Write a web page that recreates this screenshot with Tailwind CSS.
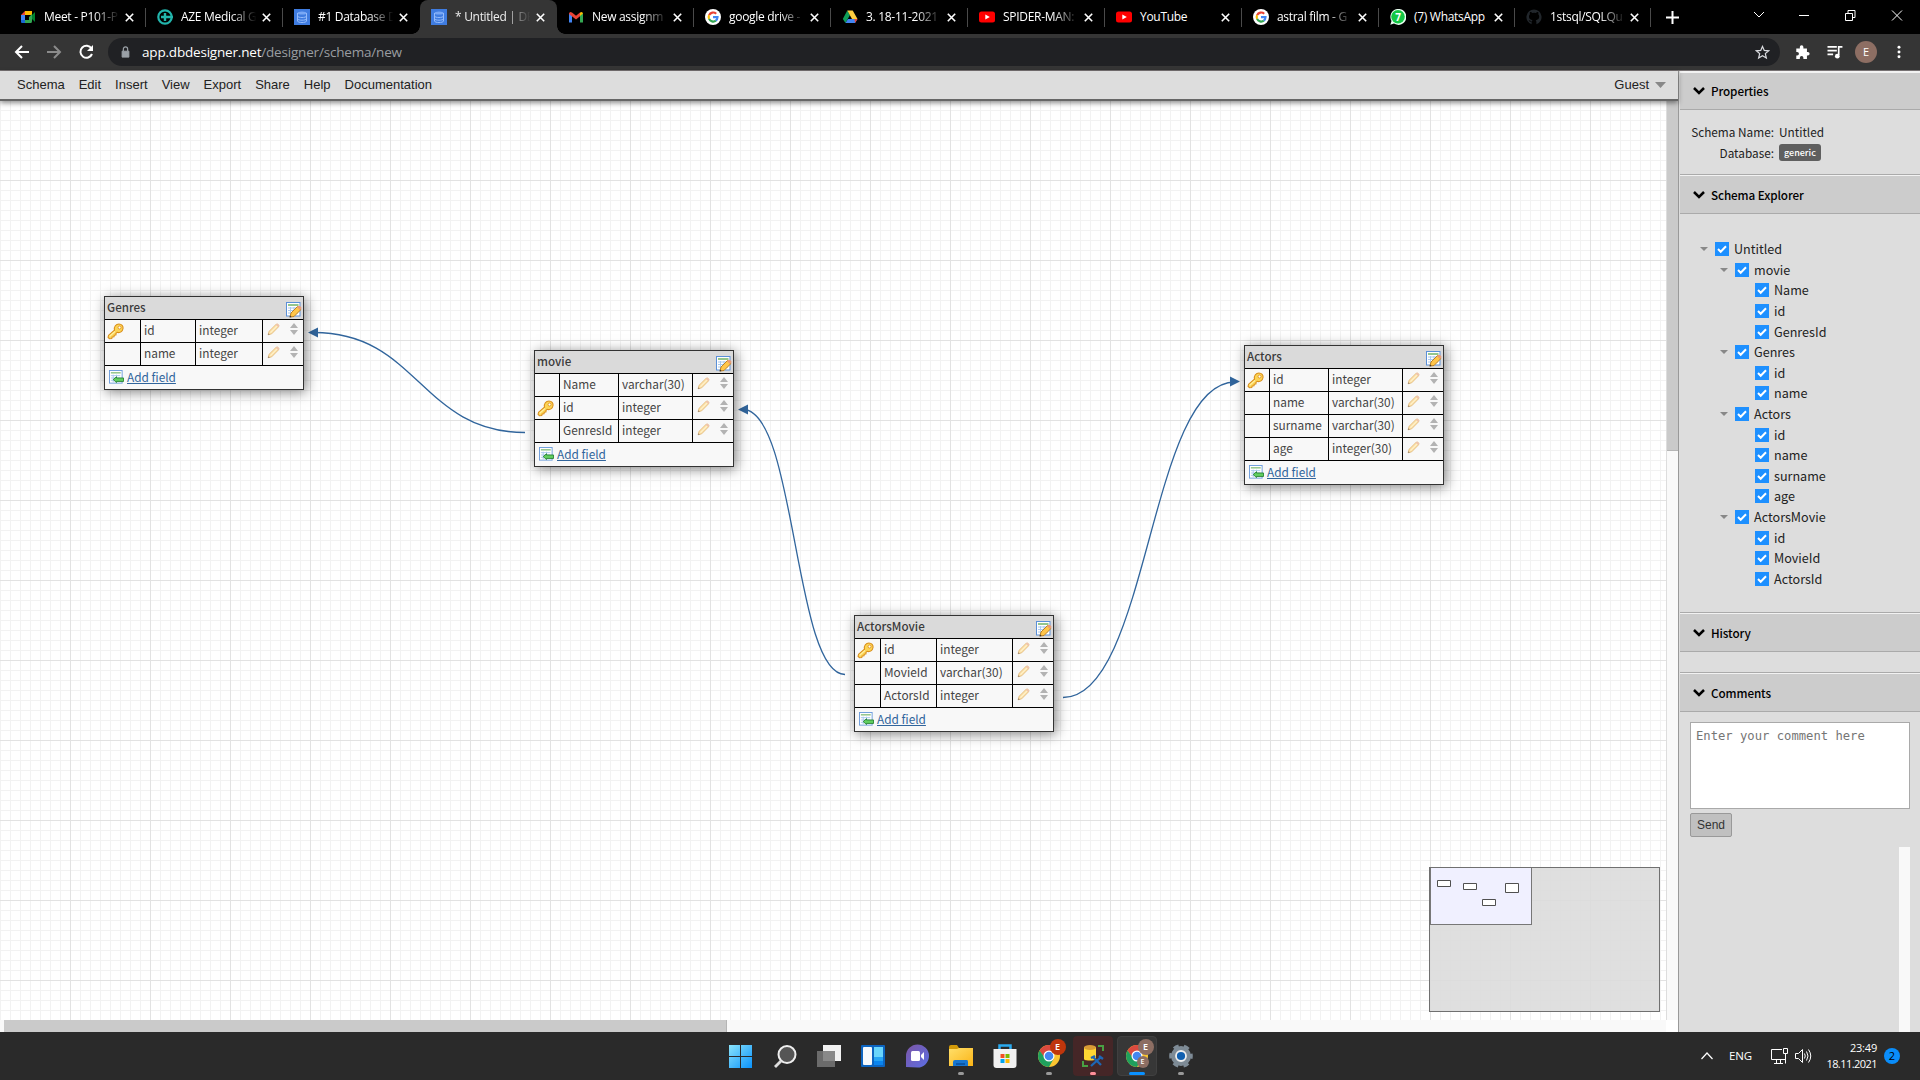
<!DOCTYPE html>
<html lang="en">
<head>
<meta charset="utf-8">
<title>* Untitled | DB Designer</title>
<script src="https://cdn.jsdelivr.net/npm/@tailwindcss/browser@4"></script>
</head>
<body class="w-[1920px] h-[1080px] overflow-hidden flex flex-col bg-white font-['Noto_Sans_CJK_SC','Noto_Sans',sans-serif]">

<svg width="0" height="0" class="absolute">
  <defs>
    <symbol id="meet" viewBox="0 0 16 16"><path d="M1 6 5 2v4z" fill="#ea4335"/><path d="M5 2h7v4H5z" fill="#fbbc04"/><path d="M1 6h4v5H1z" fill="#4285f4"/><path d="M1 11h4v3H2q-1 0-1-1z" fill="#1967d2"/><path d="M5 11h4V8l3-3v7q0 2-1 2H5z" fill="#34a853"/><path d="M12 6l3-3v10l-3-3z" fill="#00832d"/></symbol>
    <symbol id="aze" viewBox="0 0 16 16"><circle cx="8" cy="8" r="6.7" fill="none" stroke="#22b5ac" stroke-width="2.200"/><path d="M8 4v8M4 8h12" stroke="#22b5ac" stroke-width="2.400"/></symbol>
    <symbol id="db" viewBox="0 0 16 16"><path d="M0 0h16v16H0z" fill="#3f7ce0"/><ellipse cx="8" cy="4" rx="4.5" ry="1.6" fill="#79a8f5"/><path d="M3.5 4v8c0 2 9 2 9 0V4M3.5 7c0 2 9 2 9 0M3.5 9.700c0 2 9 2 9 0" fill="none" stroke="#94bbfb"/></symbol>
    <symbol id="gmail" viewBox="0 0 16 16"><path d="M1 4v9.500h3V6z" fill="#4285f4"/><path d="M12 6v7.500h3V4z" fill="#34a853"/><path d="M1 4.500Q1.500 2 4 3.500L8 6.800l4-3.300v3.700L8 10.500 1 5z" fill="#ea4335"/><path d="M12 3.500q2.500-1.500 3 1l-3 2.500z" fill="#fbbc04"/></symbol>
    <symbol id="google" viewBox="0 0 16 16"><circle cx="8" cy="8" r="8" fill="#fff"/><g fill="none" stroke-width="2.200"><path d="M4.100 6.100A4.500 4.500 0 0 1 11.200 4.700" stroke="#ea4335"/><path d="M4.100 6.100a4.500 4.500 0 0 0 0 3.800" stroke="#fbbc05"/><path d="M4.100 9.900a4.500 4.500 0 0 0 6.800 1.700" stroke="#34a853"/><path d="M8 8.200h4.500a4.500 4.500 0 0 1-1.700 3.400" stroke="#4285f4"/></g></symbol>
    <symbol id="drive" viewBox="0 0 16 16"><path d="M5.300 1.500 8 6 3.500 14 .8 10z" fill="#0f9d58"/><path d="M5.300 1.500h5.400L15.500 10H10z" fill="#ffcd40"/><path d="M3.500 14 6 10h9.500L13 14z" fill="#4285f4"/><path d="M12.500 10h3L13 14z" fill="#ea4335"/></symbol>
    <symbol id="youtube" viewBox="0 0 16 16"><rect y="2.500" width="16" height="11" rx="2.500" fill="#f00"/><path d="M6.300 5.500v5l4.500-2.500z" fill="#fff"/></symbol>
    <symbol id="whatsapp" viewBox="0 0 16 16"><path d="M.3 15.700 1.500 12A8 8 0 1 1 4 14.600z" fill="#e8fff0"/><circle cx="8" cy="7.800" r="6.800" fill="#14c845"/><text x="8" y="11.500" text-anchor="middle" font-family="Open Sans" font-size="10" font-weight="700" fill="#fff">7</text></symbol>
    <symbol id="github" viewBox="0 0 16 16"><path d="M8 .5a7.600 7.600 0 0 0-2.400 14.800v-2.500C3.500 13.200 3 11.800 2.700 11.300l1.500.2c.6 1 1.100 1 1.700.8.1-.6.400-.9.600-1.100C3.500 10.700 3 9 3 7.500c0-1 .3-1.700.9-2.300-.2-.8-.1-1.500.1-2.200 1 0 1.700.5 2.300.9a8 8 0 0 1 3.600 0c.6-.4 1.300-.9 2.300-.9.200.7.300 1.400.1 2.200.6.600.9 1.300.9 2.300 0 1.500-.5 3.200-3.500 3.700.4.400.7 1 .7 1.800v2.300A7.600 7.600 0 0 0 8 .5" fill="#21262b"/></symbol>
    <symbol id="key" viewBox="0 0 16 16"><path d="M2.200 14.800 1 13.500 1.500 11.500 7 6.800C6.300 3.500 8.500.9 11.200.9c2.600 0 4.300 2 3.900 4.300-.4 2.800-2.900 4.500-5.600 3.600L8.300 10l.2 1.200-1.700.3-.2 1.500-1.700.1-.4 1.500z" fill="#fcd455" stroke="#d98e1b"/><circle cx="11.800" cy="4.300" r="1.400" fill="#fff" stroke="#d98e1b" stroke-width=".8"/><path d="m2.500 12.500 5-4.500" stroke="#fff3a8"/></symbol>
    <symbol id="pencil" viewBox="0 0 14 14"><path d="m1.200 12.700 1-3.700L9.700 1.500q1.300-1 2.500.2t.2 2.500L5 11.700z" fill="#ffd98b" stroke="#d9a24e" stroke-width=".9"/><path d="m9.500 1.800 2.600 2.600 1-1.500-2-2z" fill="#edb09b"/><path d="m3.700 10.300 7-7" stroke="#fff0c0" stroke-width="1.200"/><path d="m1 13 .6-2 1.400 1.400z" fill="#775b42"/></symbol>
    <symbol id="tableedit" viewBox="0 0 16 16"><rect x=".5" y=".5" width="13.500" height="13.500" fill="#fff" stroke="#5b90d8"/><path d="M2 3h10.500" stroke="#7ab870" stroke-width="1.600"/><path d="M2 6h10M2 8.500h10M2 11h10M4.500 5v8M8 5v8" stroke="#a9c9ee"/><path d="m4 15 1-4L11.500 4.500l3.300 3.200L8 14.500z" fill="#ffc64a" stroke="#b87818" stroke-width=".9"/><path d="m11 5.200 1.500-1.500q2.800 0 3 2.500l-1.500 1.700z" fill="#e99a75"/><path d="m3.500 15.500.6-2 1.400 1.400z" fill="#333"/></symbol>
    <symbol id="tableadd" viewBox="0 0 16 16"><rect x=".5" y=".5" width="13.500" height="13.500" fill="#fff" stroke="#6c9cdb"/><path d="M2 3h10.500" stroke="#8cc283" stroke-width="1.500"/><path d="M2 6h10M2 8.500h10M2 11h10M4.500 5v8M8 5v8" stroke="#a9c9ee"/><path d="m4.500 10.200 3.500-3v1.300h7.500v3.700H8v1.200z" fill="#62cf60" stroke="#1f7d2c" stroke-width=".9"/></symbol>
    <symbol id="updown" viewBox="0 0 8 12"><path d="M0 5 4 0l4 5zM0 7h8l-4 5z" fill="#b3b3b3"/></symbol>
    <symbol id="chrome" viewBox="0 0 24 24"><circle cx="12" cy="12" r="11" fill="#fbc531"/><path d="M2.500 6.500a11 11 0 0 1 19 0L12 7l-4 8z" fill="#db4a3f"/><path d="M2.500 6.500A11 11 0 0 0 12 23l4.800-8.500L8 14z" fill="#1fa15d"/><circle cx="12" cy="12" r="5.500" fill="#fff"/><circle cx="12" cy="12" r="4.300" fill="#4587f0"/></symbol>
    <linearGradient id="winblue" gradientUnits="userSpaceOnUse" x1="0" y1="0" x2="23" y2="23"><stop stop-color="#8be4fb"/><stop offset="1" stop-color="#0a92fb"/></linearGradient>
    <linearGradient id="folder" x1="0" y1="0" x2="1" y2="1"><stop stop-color="#ffdf6a"/><stop offset="1" stop-color="#fbb416"/></linearGradient>
    <linearGradient id="chat" x1="0" y1="0" x2="1" y2="1"><stop stop-color="#7d55a5"/><stop offset="1" stop-color="#5b6fe5"/></linearGradient>
  </defs>
</svg>

<!-- Tab strip -->
<div class="h-[34px] shrink-0 bg-black flex text-white">
  <div id="tabs" class="flex h-full pl-[9px]"></div>
  <div class="flex-1 flex items-center pl-[14px]">
    <svg width="15" height="15" viewBox="0 0 15 15"><path d="M7.500 1v13M1 7.500h13" stroke="#fff" stroke-width="2"/></svg>
    <svg width="180" height="16" viewBox="0 0 180 16" class="ml-auto mr-[17px] mb-[5px]" fill="none" stroke="#fff"><path d="m31 5 5 5 5-5"/><path d="M76 8.500h10M122.500 6.500h7v7h-7zM125 6.500v-3h7v7h-2.500M169 3.500l10 10M179 3.500l-10 10"/></svg>
  </div>
</div>

<!-- Address bar -->
<div class="h-[36px] shrink-0 bg-[#353535] flex items-center pl-[13px] pr-[13px]">
  <svg width="86" height="20" viewBox="0 0 86 20" fill="none" stroke-width="2" class="shrink-0"><path d="M16 10H3M9 4l-6 6 6 6" stroke="#fff"/><path d="M34 10h13M41 4l6 6-6 6" stroke="#8b8b8b"/><path d="M78.500 6.500A6 6 0 1 0 79 12" stroke="#fff"/><path d="M80 3v6h-6z" fill="#fff"/></svg>
  <div class="ml-[9px] w-[1672px] h-[28px] rounded-full bg-[#202124] flex items-center pl-[13px] pr-[10px]">
    <svg width="9" height="12" viewBox="0 0 10 14"><path d="M1 6h8v7H1z" fill="#9aa0a6" stroke="#9aa0a6"/><path d="M2.500 6V3.500a2.500 2.500 0 0 1 5 0V6" fill="none" stroke="#9aa0a6" stroke-width="1.400"/></svg>
    <span class="ml-[12px] text-[13.500px] font-['Open_Sans',sans-serif] tracking-[-0.19px] text-[#9a9da1]"><span class="text-white">app.dbdesigner.net</span>/designer/schema/new</span>
    <svg width="15" height="15" viewBox="0 0 16 16" class="ml-auto"><path d="m8 1.500 1.900 4.300 4.600.4-3.500 3 1.100 4.600L8 11.400l-4.100 2.400L5 9.200l-3.500-3 4.600-.4z" fill="none" stroke="#dadce0" stroke-width="1.300"/></svg>
  </div>
  <svg width="15" height="16" viewBox="0 0 16 18" class="ml-[15px]"><path d="M1 5h4V3.500a2 2 0 0 1 4 0V5h4v4h1a2 2 0 0 1 0 4h-1v4H9v-1.500a2 2 0 0 0-4 0V17H1v-4h1a2 2 0 0 0 0-4H1z" fill="#fff"/></svg>
  <svg width="17" height="14" viewBox="0 0 17 15" class="ml-4"><path d="M1 2h10M1 6h10M1 10h6M17 2h-4v9" fill="none" stroke="#fff" stroke-width="1.800"/><circle cx="11.500" cy="12" r="2.500" fill="#fff"/></svg>
  <div class="ml-[12px] w-[22px] h-[22px] rounded-full bg-[#8d6e63] text-white text-[11px] font-['Open_Sans',sans-serif] flex items-center justify-center">E</div>
  <svg width="4" height="14" viewBox="0 0 4 16" class="ml-[20px]" fill="#fff"><circle cx="2" cy="2.500" r="1.700"/><circle cx="2" cy="8" r="1.700"/><circle cx="2" cy="13.500" r="1.700"/></svg>
</div>

<div class="h-[962px] shrink-0 flex border-t border-[#777273]">
  <!-- Designer -->
  <div class="w-[1678px] flex flex-col">
    <nav class="relative z-20 h-[30px] shrink-0 bg-[#ddd] border-b-2 border-[#666] shadow-[0_2px_5px_rgba(0,0,0,.45)] flex items-center pl-[17px] pr-3 gap-[14px] text-[13px] leading-[16px] pb-px font-['Liberation_Sans',sans-serif] text-[#222]">
      <span>Schema</span><span>Edit</span><span>Insert</span><span>View</span><span>Export</span><span>Share</span><span>Help</span><span>Documentation</span>
      <span class="ml-auto flex items-center gap-[6px]">Guest <svg width="11" height="6" viewBox="0 0 11 6"><path d="M0 0h11L5.500 6z" fill="#888"/></svg></span>
    </nav>
    <div class="flex h-[919px]">
      <main id="canvas" class="relative w-[1666px] h-full overflow-hidden">
        <svg class="absolute inset-0" width="1666" height="919" viewBox="0 101 1666 919">
          <defs>
            <pattern id="minor" width="10" height="10" patternUnits="userSpaceOnUse"><path d="M0 0h10v1H0zM0 0h1v10H0z" fill="#f2f2f2"/></pattern>
            <pattern id="major" x="70" y="20" width="80" height="80" patternUnits="userSpaceOnUse"><path d="M0 0h80v1H0zM0 0h1v80H0z" fill="#e2e2e2"/></pattern>
          </defs>
          <path d="M0 101h1666v919H0z" fill="url(#minor)"/>
          <path d="M0 101h1666v919H0z" fill="url(#major)"/>
          <g fill="none" stroke="#31659c" stroke-width="1.300">
            <path d="M525 432.500C421 432.500 418 332.500 314 332.500"/>
            <path d="M845 674.500C794 674.500 796 409.500 743 409.500"/>
            <path d="M1063 697.500C1149 697.500 1149 382 1235 382"/>
          </g>
          <path d="M308 332.500l10-5v10zM738 409.500l10-5v10zM1240 381.500l-10-5v10z" fill="#31659c"/>
        </svg>
        <!-- Overview map -->
        <div class="absolute left-[1429px] top-[766px] w-[231px] h-[145px] border border-[#707070] bg-[#dcdcdc]/90">
          <div class="w-[102px] h-[57px] bg-[#f0f0ff] border-r border-b border-l border-[#777]">
            <svg width="101" height="56" viewBox="1431 868 101 56" fill="#fff" stroke="#505050"><path d="M1437.500 880.500h13v6h-13zM1463.500 883.500h13v6h-13zM1505.500 883.500h13v9h-13zM1482.500 899.500h13v6h-13z"/></svg>
          </div>
        </div>
      </main>
      <div class="w-3 bg-[#f9f9f9] border-l border-[#ddd]"><div class="h-[350px] bg-[#cacaca] border-b border-[#b5b5b5]"></div></div>
    </div>
    <div class="h-3 shrink-0 bg-[#f9f9f9] flex pl-1"><div class="w-[723px] bg-[#cacaca] border-r border-[#b5b5b5]"></div><div class="ml-auto w-3 bg-white"></div></div>
  </div>

  <!-- Side panel -->
  <aside class="flex-1 bg-[#ddd] border-l border-[#999] pl-px text-[#222] text-[12.600px] leading-[20px]">
    <h2 class="h-[39px] bg-[#ccc] border-t-2 border-[#f2f2f2] flex items-center pl-[13px] pb-px gap-[6px] text-[11.700px] tracking-[-0.1px] font-medium text-black shadow-[inset_0_-1px_0_#aaa]"><svg width="12" height="8" viewBox="0 0 12 8"><path d="m1 1 5 5 5-5" fill="none" stroke="#000" stroke-width="2.500"/></svg>Properties</h2>
    <div class="h-[65px] border-b border-[#aaa] pt-[11px] grid grid-cols-[94px_1fr] gap-x-[5px] content-start leading-[21px] text-[11.800px]">
      <span class="text-right">Schema Name:</span><span>Untitled</span>
      <span class="text-right">Database:</span><span class="flex items-center"><b class="bg-[#5f5f5f] text-white rounded-[3px] px-[5px] h-[17px] leading-[17px] text-[9px] font-medium">generic</b></span>
    </div>
    <h2 class="h-[39px] bg-[#ccc] border-t border-[#f2f2f2] flex items-center pl-[13px] gap-[6px] text-[11.700px] tracking-[-0.1px] font-medium text-black shadow-[inset_0_-1px_0_#aaa]"><svg width="12" height="8" viewBox="0 0 12 8"><path d="m1 1 5 5 5-5" fill="none" stroke="#000" stroke-width="2.500"/></svg>Schema Explorer</h2>
    <div id="tree" class="h-[399px] border-b border-[#aaa] pt-[25px]"></div>
    <h2 class="h-[39px] bg-[#ccc] border-t border-[#f2f2f2] flex items-center pl-[13px] gap-[6px] text-[11.700px] tracking-[-0.1px] font-medium text-black shadow-[inset_0_-1px_0_#aaa]"><svg width="12" height="8" viewBox="0 0 12 8"><path d="m1 1 5 5 5-5" fill="none" stroke="#000" stroke-width="2.500"/></svg>History</h2>
    <div class="h-[21px] border-b border-[#aaa]"></div>
    <h2 class="h-[39px] bg-[#ccc] border-t border-[#f2f2f2] flex items-center pl-[13px] gap-[6px] text-[11.700px] tracking-[-0.1px] font-medium text-black shadow-[inset_0_-1px_0_#aaa]"><svg width="12" height="8" viewBox="0 0 12 8"><path d="m1 1 5 5 5-5" fill="none" stroke="#000" stroke-width="2.500"/></svg>Comments</h2>
    <div class="px-[10px] pt-[10px]">
      <div class="h-[87px] bg-white border border-[#a9a9a9] px-[5px] pt-[5px] leading-[17px] text-[12.200px] font-['DejaVu_Sans_Mono',monospace] text-[#757575]">Enter your comment here</div>
      <div class="mt-1 w-[42px] h-6 bg-[#c0c0c0] border border-[#999] rounded-[2px] text-[12px] leading-[23px] text-center font-['Liberation_Sans',sans-serif] text-[#333]">Send</div>
      <div class="mt-[10px] ml-auto w-[11px] h-[185px] bg-[#f9f9f9]"></div>
    </div>
  </aside>
</div>

<!-- Taskbar -->
<footer class="h-12 shrink-0 bg-[#2a2a2a] flex items-center text-white font-['Open_Sans',sans-serif]">
  <div class="flex ml-[718.500px] h-full">
    <div class="w-11 flex items-center justify-center"><svg width="23" height="23" viewBox="0 0 23 23"><path d="M0 0h11v11H0zM12 0h11v11H12zM0 12h11v11H0zM12 12h11v11H12z" fill="url(#winblue)"/></svg></div>
    <div class="w-11 flex items-center justify-center"><svg width="24" height="24" viewBox="0 0 24 24"><circle cx="14" cy="10.500" r="8.500" fill="#555" stroke="#eee" stroke-width="2"/><path d="m8 17-6 6" stroke="#ddd" stroke-width="2.800"/></svg></div>
    <div class="w-11 flex items-center justify-center"><svg width="24" height="24" viewBox="0 0 24 24"><path d="M6 1h18v16H6z" fill="#f2f2f2"/><path d="M0 7h18v16H0z" fill="#777" fill-opacity=".85"/></svg></div>
    <div class="w-11 flex items-center justify-center"><svg width="24" height="24" viewBox="0 0 24 24"><rect y="1" width="24" height="22" rx="1" fill="#0c64c0"/><rect x="2" y="3" width="9" height="18" rx="1" fill="#f4f8fc"/><path d="M13 3h9v10h-9z" fill="#69d5fb"/><path d="M13 13h9v4h-9z" fill="#25a5f5"/><path d="M13 17h9v4h-9z" fill="#0a84ee"/></svg></div>
    <div class="w-11 flex items-center justify-center"><svg width="24" height="24" viewBox="0 0 24 24"><path d="M1 23V12A11.500 11.500 0 1 1 12.500 23.500z" fill="url(#chat)"/><rect x="6" y="7" width="9" height="10" rx="1.500" fill="#fff"/><path d="m16 11 3-3v8l-3-3z" fill="#fff"/></svg></div>
    <div class="relative w-11 flex items-center justify-center"><svg width="24" height="24" viewBox="0 0 24 24"><path d="M0 3q0-2 2-2h6l2 3v3H0z" fill="#d39a09"/><path d="M0 5h8l2-1h14v18H0z" fill="url(#folder)"/><path d="M4 22v-4q0-2 2-2h12q1 0 1 2v4z" fill="#1876cf"/><path d="M7 20h9" stroke="#0c58a8" stroke-width="2"/></svg><i class="absolute bottom-[5px] left-[19px] w-[6px] h-[3px] rounded-full bg-[#999]"></i></div>
    <div class="w-11 flex items-center justify-center"><svg width="24" height="24" viewBox="0 0 24 24"><path d="M6.500 7V1.500h11V7" fill="none" stroke="#2aabf0" stroke-width="2.500"/><path d="M.5 5h23v16q0 3-3 3h-17q-3 0-3-3z" fill="#f1f1f1"/><path d="M7.500 10h4v4h-4z" fill="#f25022"/><path d="M12.500 10h4v4h-4z" fill="#7fba00"/><path d="M7.500 15h4v4h-4z" fill="#00a4ef"/><path d="M12.500 15h4v4h-4z" fill="#ffb900"/></svg></div>
    <div class="relative w-11 flex items-center justify-center"><svg width="24" height="24"><use href="#chrome"/></svg><span class="absolute left-[23px] top-[7px] size-[16px] rounded-full bg-[#bf360c] text-[9px] leading-[16px] text-center font-semibold">E</span><i class="absolute bottom-[5px] left-[19px] w-[6px] h-[3px] rounded-full bg-[#999]"></i></div>
    <div class="relative w-11 flex items-center justify-center"><div class="w-10 h-10 rounded bg-[#452627] flex items-center justify-center"><svg width="24" height="24" viewBox="0 0 24 24"><path d="M3 3v12c0 2 12 2 12 0V3z" fill="#ffd633"/><ellipse cx="9" cy="3.500" rx="6" ry="2.500" fill="#d99a35"/><path d="M17 2h5v5M2 17v5h5" fill="none" stroke="#49a043" stroke-width="2"/><path d="m10 22 10-9M12 13l8 8M10 14l4-2M18 12l4 3" stroke="#1d66b5" stroke-width="2.300"/></svg></div><i class="absolute bottom-[5px] left-[19px] w-[6px] h-[3px] rounded-full bg-[#ff8f99]"></i></div>
    <div class="relative w-11 flex items-center justify-center"><div class="w-10 h-10 rounded bg-[#373737] border border-[#404040] flex items-center justify-center"><svg width="24" height="24"><use href="#chrome"/></svg></div><span class="absolute left-[23px] top-[7px] size-[16px] rounded-full bg-[#8d6e63] text-[9px] leading-[16px] text-center font-semibold">E</span><span class="absolute left-[22px] top-[24px] size-[12px] rounded-full bg-[#8d6e63] text-[7px] leading-[12px] text-center font-semibold">E</span><i class="absolute bottom-[5px] left-[14px] w-[16px] h-[3px] rounded-full bg-[#0a91ff]"></i></div>
    <div class="relative w-11 flex items-center justify-center"><svg width="24" height="24" viewBox="0 0 24 24"><circle cx="12" cy="12" r="8.500" fill="none" stroke="#7e8b96" stroke-width="3"/><circle cx="12" cy="12" r="10.300" fill="none" stroke="#7e8b96" stroke-width="3" stroke-dasharray="5.400 5.387" stroke-dashoffset="2.700"/><circle cx="12" cy="12" r="8" fill="#7e8b96"/><circle cx="12" cy="12" r="5" fill="#1160b0" stroke="#eee" stroke-width="1.800"/></svg><i class="absolute bottom-[5px] left-[19px] w-[6px] h-[3px] rounded-full bg-[#999]"></i></div>
  </div>
  <div class="ml-auto mr-[20px] flex items-center">
    <svg width="12" height="8" viewBox="0 0 12 8"><path d="m.5 7 5.500-6 5.500 6" fill="none" stroke="#fff" stroke-width="1.200"/></svg>
    <span class="ml-[16px] text-[11.500px] w-[24px] tracking-[-0.1px]">ENG</span>
    <svg class="ml-[18px]" width="41" height="18" viewBox="0 0 41 18" fill="none" stroke="#fff"><path d="M11 2.500H.500v10h14V8M3 16.500h9M5.500 12.500v4M9.500 12.500v4M12.500 1.500h4v5h-4zM14.500 6.500v10"/><path d="M24.500 6.500h3l4-4v13l-4-4h-3zM33.500 6.500q1.500 2.500 0 5M35.500 4.500q3 4.500 0 9M37.500 2.500q4.500 6.500 0 13"/></svg>
    <div class="ml-[13px] w-[52px] text-right text-[11px] leading-[16px] tracking-[-0.55px] whitespace-nowrap flex flex-col items-end"><span class="tracking-[-0.2px]">23:49</span><span>18.11.2021</span></div>
    <span class="ml-[7px] size-4 rounded-full bg-[#0a8dfa] text-black text-[11px] leading-[16px] text-center">2</span>
  </div>
</footer>

<script>
const tabs = [
  ['meet', 'Meet - P101-P'], ['aze', 'AZE Medical G'], ['db', '#1 Database D'], ['db', '* Untitled | DB', true],
  ['gmail', 'New assignm'], ['google', 'google drive -'], ['drive', '3. 18-11-2021'], ['youtube', 'SPIDER-MAN:'],
  ['youtube', 'YouTube'], ['google', 'astral film - G'], ['whatsapp', '(7) WhatsApp'], ['github', '1stsql/SQLQu']
];
document.getElementById('tabs').innerHTML = tabs.map(([icon, label, active], i) => `
  <div class="relative h-full flex items-center pl-[11px] pr-[12px] ${i > 9 ? 'w-[136px]' : 'w-[137px]'} ${active ? 'bg-[#353535] rounded-t-[8px]' : ''}">
    ${active ? '<i class="absolute bottom-0 -left-2 size-2 bg-[radial-gradient(circle_at_0_0,#000_7.5px,#353535_8px)]"></i><i class="absolute bottom-0 -right-2 size-2 bg-[radial-gradient(circle_at_100%_0,#000_7.5px,#353535_8px)]"></i>' : ''}
    <svg class="size-4 shrink-0"><use href="#${icon}"/></svg>
    <span class="ml-[8px] w-[77px] whitespace-nowrap text-[12px] leading-[18px] tracking-[-0.3px] font-['Open_Sans',sans-serif] ${label === 'YouTube' || icon === 'whatsapp' ? '' : '[mask-image:linear-gradient(to_right,black_65%,transparent_98%)]'} ${active ? 'text-[#eee]' : ''}">${label}</span>
    <svg class="absolute right-[12px]" width="9" height="9" viewBox="0 0 9 9"><path d="m.8.8 7.400 7.400M8.200.8.800 8.200" stroke="#fff" stroke-width="1.600"/></svg>
    ${active || i === 2 ? '' : '<i class="absolute right-0 top-[8px] w-px h-[19px] bg-[#4a4a4a]"></i>'}
  </div>`).join('');

const tables = [
  { name: 'Genres', x: 104, y: 195, cols: [35, 54, 66], rows: [['id', 'integer', 1], ['name', 'integer']] },
  { name: 'movie', x: 534, y: 249, cols: [24, 58, 73], rows: [['Name', 'varchar(30)'], ['id', 'integer', 1], ['GenresId', 'integer']] },
  { name: 'ActorsMovie', x: 854, y: 514, cols: [25, 55, 75], rows: [['id', 'integer', 1], ['MovieId', 'varchar(30)'], ['ActorsId', 'integer']] },
  { name: 'Actors', x: 1244, y: 244, cols: [24, 58, 73], rows: [['id', 'integer', 1], ['name', 'varchar(30)'], ['surname', 'varchar(30)'], ['age', 'integer(30)']] }
];
document.getElementById('canvas').insertAdjacentHTML('beforeend', tables.map(t => `
  <section class="absolute w-[200px] border border-[#333] bg-[#f8f8f8] shadow-[2px_2px_12px_rgba(0,0,0,.5)] text-[11.850px] text-[#444]" style="left:${t.x}px;top:${t.y}px">
    <header class="h-[22px] bg-[#dadada] flex items-center justify-between pl-[2px] pr-[1px] text-[11.600px] leading-[21px] font-medium text-[#3a3a3a]"><span class="pb-px">${t.name}</span><svg width="16" height="16" class="mt-[4px]"><use href="#tableedit"/></svg></header>
    ${t.rows.map(r => `
    <div class="h-[23px] border-t border-black flex leading-[20px]">
      <div class="flex items-center pl-[2px] shrink-0" style="width:${t.cols[0]}px">${r[2] ? '<svg width="17" height="17"><use href="#key"/></svg>' : ''}</div>
      <div class="border-l border-black pl-[3px] shrink-0 box-content" style="width:${t.cols[1] - 3}px">${r[0]}</div>
      <div class="border-l border-black pl-[3px] shrink-0 box-content" style="width:${t.cols[2] - 3}px">${r[1]}</div>
      <div class="border-l border-black flex-1 flex justify-between pl-[4px] pr-[5px] pt-[3px]"><svg width="13" height="13" class="opacity-75"><use href="#pencil"/></svg><svg width="8" height="12"><use href="#updown"/></svg></div>
    </div>`).join('')}
    <div class="h-[24px] border-t border-black flex items-center pl-[4px] gap-[3px]"><svg width="15" height="15"><use href="#tableadd"/></svg><a class="text-[#31659c] underline leading-[20px] pb-px">Add field</a></div>
  </section>`).join(''));

const tree = [[0, 'Untitled'], [1, 'movie'], [2, 'Name'], [2, 'id'], [2, 'GenresId'], [1, 'Genres'], [2, 'id'], [2, 'name'], [1, 'Actors'], [2, 'id'], [2, 'name'], [2, 'surname'], [2, 'age'], [1, 'ActorsMovie'], [2, 'id'], [2, 'MovieId'], [2, 'ActorsId']];
document.getElementById('tree').innerHTML = tree.map(([level, label]) => `
  <div class="h-[20.600px] flex items-center" style="padding-left:${20 + level * 20}px">
    <svg width="8" height="4" viewBox="0 0 8 4" class="mr-[7px] shrink-0">${level < 2 ? '<path d="M0 0h8L4 4z" fill="#888"/>' : ''}</svg>
    <svg width="14" height="14" viewBox="0 0 14 14" class="shrink-0"><path d="M0 0h14v14H0z" fill="#1e90ff"/><path d="m3 7 2.700 2.700L11 4.200" fill="none" stroke="#fff" stroke-width="2"/></svg>
    <span class="ml-[5px]">${label}</span>
  </div>`).join('');
</script>
</body>
</html>
